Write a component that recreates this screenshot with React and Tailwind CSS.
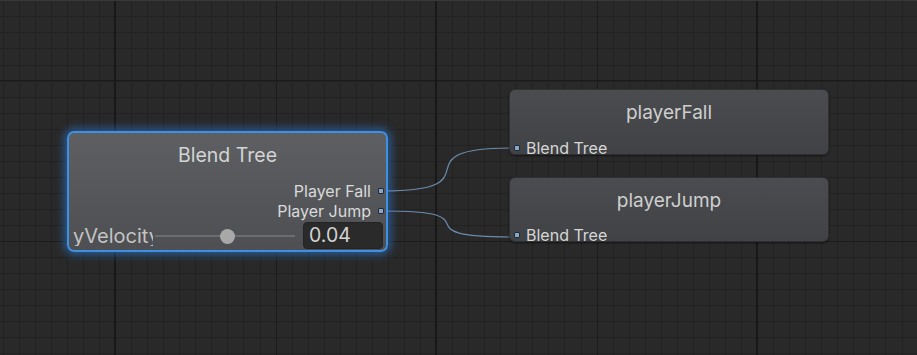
import React from 'react';

const W = 917;
const H = 355;

// grid lines of the animator canvas
const vMinor = Array.from({ length: 58 }, (_, k) => Math.round(2.7 + 16.05 * k));
const hMinor = Array.from({ length: 23 }, (_, k) => Math.round(0.3 + 16.05 * k));
const vMedium = [276, 597];
const vMajor = [115, 436, 757];
const hMedium = [80, 241];

const Grid = () => (
    <svg className="absolute inset-0" width={W} height={H} viewBox={`0 0 ${W} ${H}`}>
        <rect width={W} height={H} fill="#292929" />
        {vMinor.map((x) => (
            <line key={'v' + x} x1={x + 0.5} y1="0" x2={x + 0.5} y2={H} stroke="#222222" strokeWidth="1" />
        ))}
        {hMinor.map((y) => (
            <line key={'h' + y} x1="0" y1={y + 0.5} x2={W} y2={y + 0.5} stroke="#222222" strokeWidth="1" />
        ))}
        {vMedium.map((x) => (
            <line key={'vm' + x} x1={x + 0.5} y1="0" x2={x + 0.5} y2={H} stroke="#1c1c1c" strokeWidth="1" />
        ))}
        {hMedium.map((y) => (
            <line key={'hm' + y} x1="0" y1={y + 0.5} x2={W} y2={y + 0.5} stroke="#1b1b1b" strokeWidth="1" />
        ))}
        {vMajor.map((x) => (
            <line key={'vM' + x} x1={x} y1="0" x2={x} y2={H} stroke="#181818" strokeWidth="2" />
        ))}
        <line x1="0" y1="0.5" x2={W} y2="0.5" stroke="#383838" strokeWidth="1" />
        {/* connections */}
        <path d="M383 191 C 500 191, 394 148, 512 148" fill="none" stroke="#6b8cac" strokeWidth="1.2" />
        <path d="M383 211 C 500 211, 394 237, 512 237" fill="none" stroke="#6b8cac" strokeWidth="1.2" />
    </svg>
);

const Port = () => (
    <span className="block w-[6px] h-[6px] rounded-[1px] bg-[#86a7c6] border border-[#1f2a35] shrink-0" />
);

const StateNode = ({ title, top, height }) => (
    <div
        className="absolute left-[509px] w-[320px] rounded-[6px] border border-[#2f3032] bg-gradient-to-b from-[#4a4c4f] to-[#404245] shadow-[0_1px_2px_rgba(0,0,0,0.5)] flex flex-col"
        style={{ top, height }}
    >
        <div className="flex-1 pb-[4px] flex items-center justify-center text-[19px] text-[#cfcfcf]">{title}</div>
        <div className="shrink-0 flex items-center gap-[6px] pl-[4px] h-[13px] text-[16px] text-[#d6d6d6] leading-none">
            <Port />
            <span>Blend Tree</span>
        </div>
    </div>
);

const BlendTreeNode = () => (
    <div className="absolute left-[67px] top-[131px] w-[321px] h-[121px] rounded-[7px] border-2 border-[#3f90e2] bg-gradient-to-b from-[#5d5f62] to-[#4d4f52] shadow-[0_0_9px_3px_rgba(45,130,225,0.55)] flex flex-col">
        <div className="h-[48px] shrink-0 pb-[2px] flex items-center justify-center text-[19.5px] text-[#d4d4d4]">Blend Tree</div>
        <div className="h-[20px] shrink-0 flex items-center justify-end gap-[7px] pr-[2px] text-[16px] text-[#dadada]">
            <span>Player Fall</span>
            <Port />
        </div>
        <div className="h-[20px] shrink-0 flex items-center justify-end gap-[7px] pr-[2px] text-[16px] text-[#dadada]">
            <span>Player Jump</span>
            <Port />
        </div>
        <div className="h-[29px] shrink-0 flex items-center pl-[4px] pr-[3px]">
            <div className="w-[80px] overflow-hidden whitespace-nowrap text-[20px] text-[#c4c4c4] leading-none">yVelocity</div>
            <div className="relative ml-[2px] w-[140px] h-[16px] flex items-center">
                <div className="w-full h-[2px] bg-[#6a6c6f]" />
                <div className="absolute left-[65px] top-[1px] w-[15px] h-[15px] rounded-full bg-[#a8a8a8]" />
            </div>
            <div className="ml-auto w-[80px] h-[27px] rounded-[4px] bg-[#2a2a2a] border border-[#232323] flex items-center pl-[5px] text-[19.5px] text-[#d2d2d2]">
                0.04
            </div>
        </div>
    </div>
);

export default function App() {
    return (
        <div
            className="relative w-[917px] h-[355px] overflow-hidden bg-[#292929]"
            style={{ fontFamily: 'Inter, "Noto Sans", sans-serif' }}
        >
            <Grid />
            <BlendTreeNode />
            <StateNode title="playerFall" top={89} height={66} />
            <StateNode title="playerJump" top={177} height={65} />
        </div>
    );
}
